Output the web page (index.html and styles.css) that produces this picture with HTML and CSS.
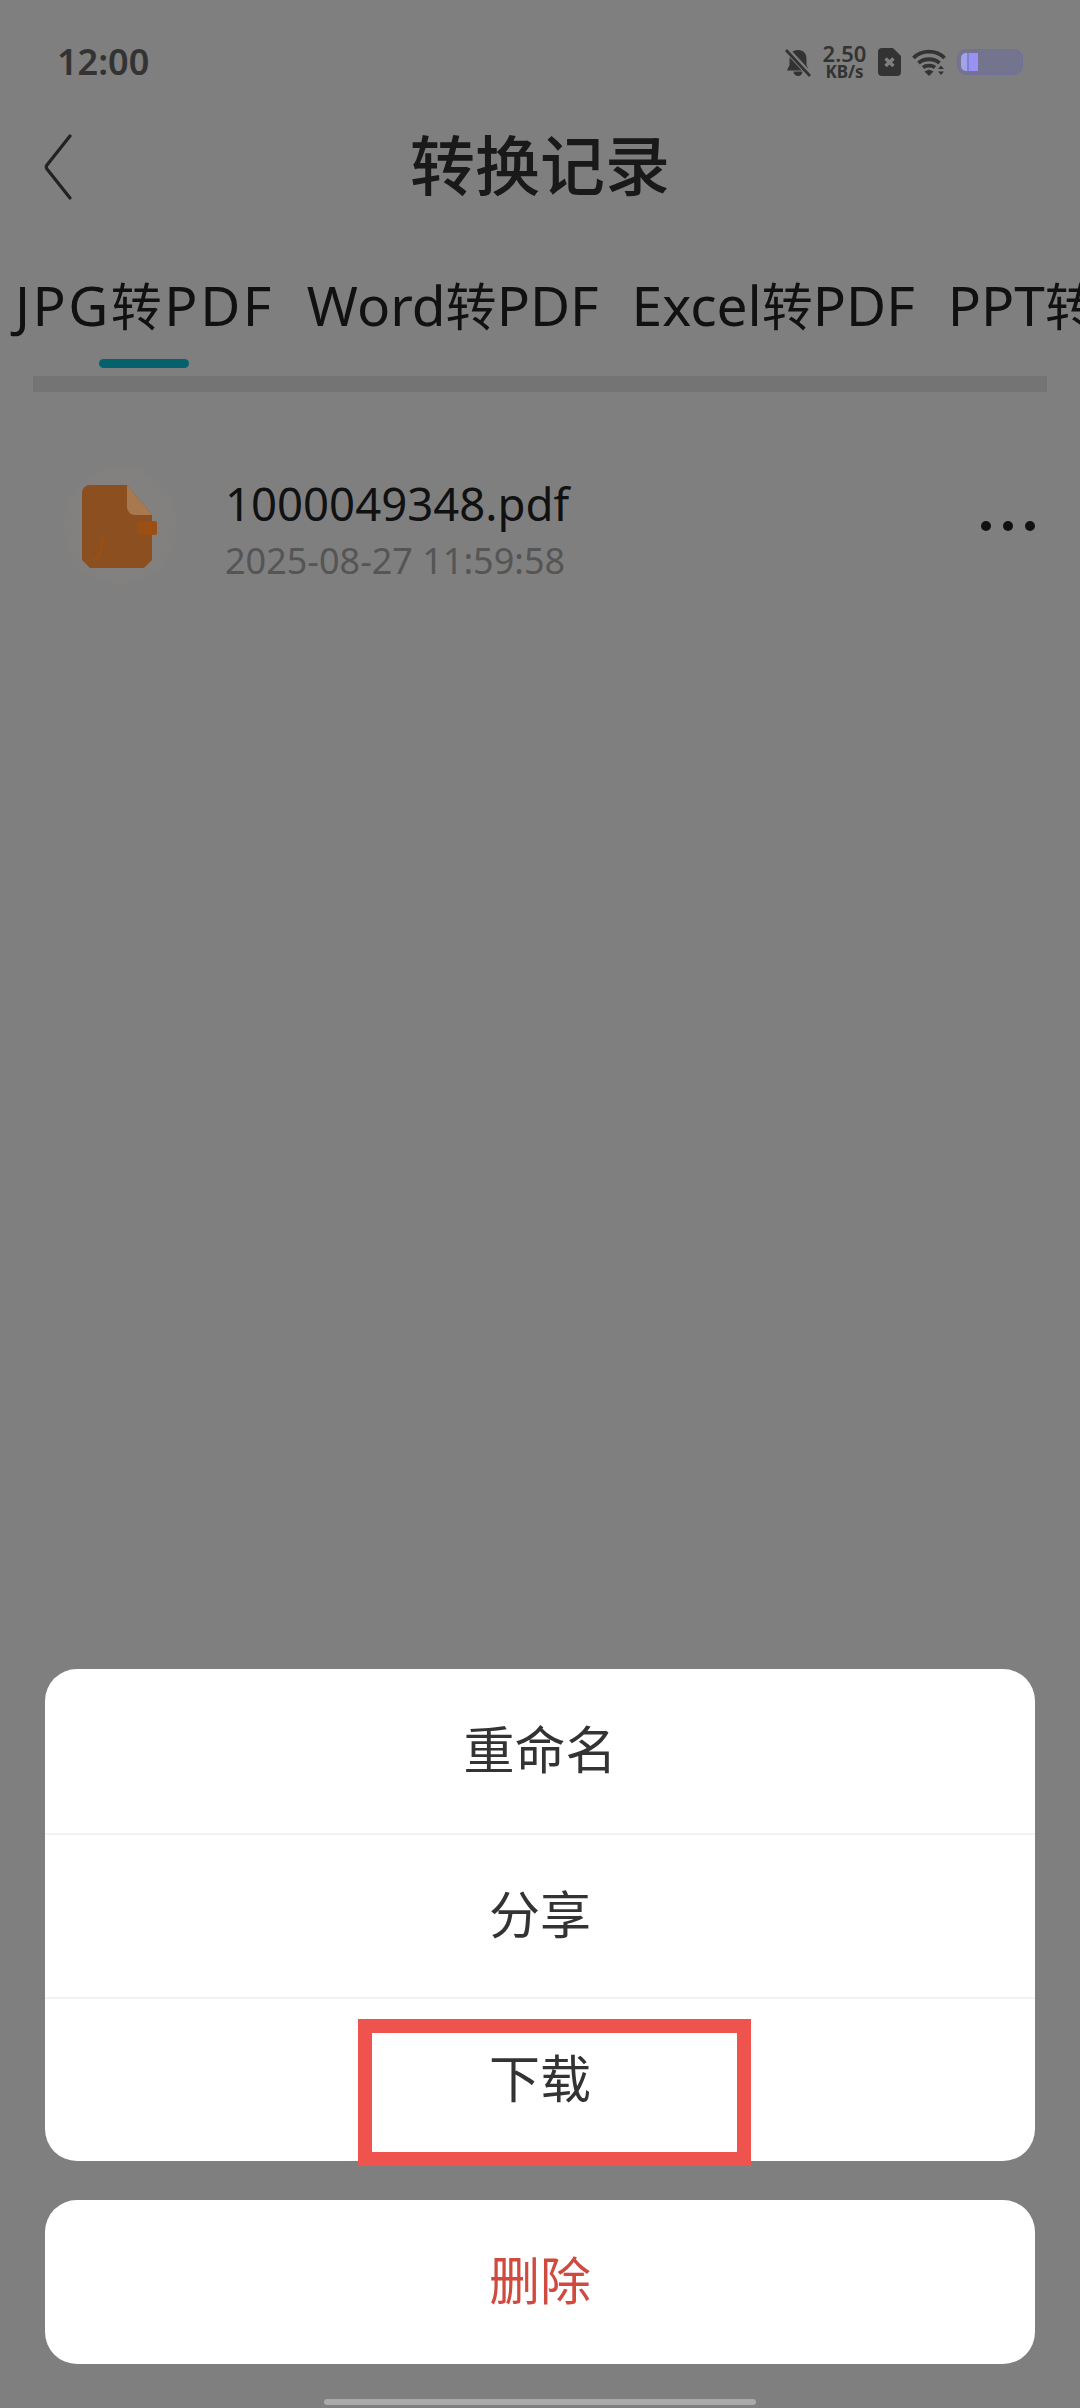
FILE: index.html
```html
<!DOCTYPE html>
<html lang="zh-CN">
<head>
  <meta charset="UTF-8" />
  <meta name="viewport" content="width=device-width, initial-scale=1.0"/>
  <title>转换记录</title>
  <link rel="stylesheet" href="styles.css">
</head>
<body>

<div class="page">
  <div class="status-bar">
    <span class="clock">12:00</span>
    <div class="status-icons">
      <svg class="ic-bell" viewBox="0 0 26 29" width="26" height="29">
        <path d="M13 2C7 2 4.500 6 4.500 11v6L2 22.500h22L21.500 17v-6C21.500 6 19 2 13 2z" fill="#666"/>
        <path d="M8.500 23.500a4.500 4.500 0 0 0 9 0z" fill="#666"/>
        <path d="M1 1l24 26" stroke="#fff" stroke-width="6"/>
        <path d="M1 2l24 26" stroke="#666" stroke-width="2.800"/>
      </svg>
      <div class="speed">
        <span class="speed-num">2.50</span>
        <span class="speed-unit">KB/s</span>
      </div>
      <svg class="ic-sim" viewBox="0 0 23 28" width="23" height="28">
        <path d="M4 0h11l8 8v16a4 4 0 0 1-4 4H4a4 4 0 0 1-4-4V4a4 4 0 0 1 4-4z" fill="#666"/>
        <path d="M7.500 10.500l8 7.500M15.500 10.500l-8 7.500" stroke="#fff" stroke-width="3.400"/>
      </svg>
      <svg class="ic-wifi" viewBox="0 0 34 27" width="34" height="27">
        <g fill="none" stroke="#666" stroke-width="3.800">
          <path d="M1.500 9c8-8.500 23-8.500 31 0"/>
          <path d="M6.500 14c5.500-5 15.500-5 21 0"/>
          <path d="M11 18.500c3-2.500 9-2.500 12 0"/>
        </g>
        <path d="M12.500 22.500l4.500-2 4.500 2-4.500 4.500z" fill="#666"/>
        <path d="M26 20l3-3.500 3 3.500zM26 22.500h6l-3 3.500z" fill="#666"/>
      </svg>
      <div class="battery">
        <div class="battery-fill"></div>
      </div>
    </div>
  </div>

  <header class="top-bar">
    <svg class="back" viewBox="0 0 28 66" width="28" height="66">
      <path d="M26 2L3 31q-1.500 2 0 4l23 29" fill="none" stroke="#444" stroke-width="3.200" stroke-linecap="round"/>
    </svg>
    <h1>转换记录</h1>
  </header>

  <nav class="tabs">
    <div class="tab tab-on"><span>JPG<b>转</b>PDF</span><i></i></div>
    <div class="tab"><span>Word<b>转</b>PDF</span></div>
    <div class="tab"><span>Excel<b>转</b>PDF</span></div>
    <div class="tab"><span>PPT<b>转</b>PDF</span></div>
  </nav>
  <div class="tabs-line"></div>

  <div class="file-row">
    <div class="file-icon">
      <svg viewBox="0 0 78 84" width="78" height="84">
        <path d="M9 0h37l25 30v45l-8 8H9l-8-8V8a8 8 0 0 1 8-8z" fill="#8c4f20"/>
        <path d="M46 0l25 30H54a8 8 0 0 1-8-8z" fill="#a8794f"/>
        <rect x="57" y="36" width="19" height="14" rx="2" fill="#9a4f15"/>
        <text x="16" y="70" class="file-letter">J</text>
      </svg>
    </div>
    <div class="file-info">
      <div class="file-name">1000049348.pdf</div>
      <div class="file-date">2025-08-27 11:59:58</div>
    </div>
    <div class="more"><i></i><i></i><i></i></div>
  </div>
</div>

<!-- menu shown on top of the dimmed list -->
<div class="mask">
  <div class="sheet">
    <div class="sheet-item">重命名</div>
    <div class="sheet-item">分享</div>
    <div class="sheet-item">下载</div>
    <div class="mark"></div>
  </div>
  <div class="sheet">
    <div class="sheet-item danger">删除</div>
  </div>
  <div class="home-bar"></div>
</div>

</body>
</html>
```

FILE: styles.css
```css
* {
  box-sizing: border-box;
}

body {
  margin: 0;
  width: 1080px;
  height: 2408px;
  overflow: hidden;
  position: relative;
  background: #fff;
  font-family: "Noto Sans", "Noto Sans CJK SC", sans-serif;
}

.page {
  height: 100%;
}

/* Barra de estado */
.status-bar {
  height: 121px;
  padding: 44px 57px 0;
  display: flex;
  justify-content: space-between;
  align-items: flex-start;
}

.clock {
  font-size: 36px;
  line-height: 36px;
  font-weight: 600;
  color: #666;
}

.status-icons {
  display: flex;
  align-items: center;
  height: 36px;
}

.ic-bell { margin-right: 12px; }
.ic-sim { margin-left: 12px; }
.ic-wifi { margin-left: 11px; }

.speed {
  display: flex;
  flex-direction: column;
  align-items: center;
  color: #666;
  width: 43px;
}

.speed-num {
  font-size: 22px;
  line-height: 20px;
  font-weight: 600;
}

.speed-unit {
  font-size: 17px;
  line-height: 18px;
  font-weight: 700;
}

/* the battery keeps its bright tint, so it sits above the mask */
.battery {
  position: relative;
  z-index: 2;
  width: 66px;
  height: 26px;
  margin-left: 11px;
  padding: 3px;
  background: #74748f;
  border: 1px solid #70709c;
  border-radius: 9px;
}

.battery-fill {
  width: 17px;
  height: 100%;
  background: linear-gradient(to right, #a0a2ec 0 38%, #7f7fd0 38% 48%, #9a90f6 48%);
  border-radius: 5px 0 0 5px;
}

/* Cabecera */
.top-bar {
  height: 88px;
  position: relative;
  display: flex;
  align-items: center;
  justify-content: center;
}

.back {
  position: absolute;
  left: 44px;
  top: 13px;
}

h1 {
  margin: 0;
  font-size: 65px;
  line-height: 88px;
  font-weight: 500;
  color: #333;
}

/* Pestañas */
.tabs {
  display: flex;
  gap: 33px;
  padding: 61px 0 0 15px;
  overflow: hidden;
  white-space: nowrap;
}

.tab {
  flex: none;
  display: flex;
  flex-direction: column;
  align-items: center;
  font-size: 55px;
  line-height: 70px;
  color: #222;
}

.tab b {
  font-size: 51px;
  font-weight: 400;
}

.tab-on {
  letter-spacing: 2.500px;
}

.tab i {
  display: block;
  width: 90px;
  height: 9px;
  margin-top: 18px;
  border-radius: 5px;
  background: #0ac4d8;
}

.tabs-line {
  height: 16px;
  margin: 8px 33px 0;
  background: #e8e8e8;
}

/* Fila del archivo */
.file-row {
  display: flex;
  align-items: center;
  height: 148px;
  margin-top: 59px;
  padding: 0 45px 0 50px;
}

.file-icon {
  position: relative;
  z-index: 2;
  width: 141px;
  height: 148px;
  margin-right: 34px;
  padding: 34px 0 0 31px;
  background: radial-gradient(closest-side, #838180 60%, rgba(128,128,128,0) 100%);
  filter: blur(0.6px);
}

.file-letter {
  font-size: 26px;
  font-style: italic;
  fill: #9d4f12;
}

.file-info {
  flex: 1;
  padding-top: 5px;
}

.file-name {
  font-size: 45.500px;
  line-height: 62px;
  color: #222;
}

.file-date {
  font-size: 36px;
  line-height: 46px;
  margin-top: 4px;
  color: #aaa;
}

.more {
  display: flex;
  gap: 12px;
  padding-top: 2px;
}

.more i {
  width: 10px;
  height: 10px;
  border-radius: 50%;
  background: #222;
}

/* Capa oscura y menú inferior */
.mask {
  position: absolute;
  inset: 0;
  display: flex;
  flex-direction: column;
  justify-content: flex-end;
  gap: 39px;
  padding: 0 45px 44px;
  background: rgba(0,0,0,0.5);
}

.sheet {
  position: relative;
  background: #fff;
  border-radius: 32px;
}

.sheet-item {
  height: 164px;
  display: flex;
  align-items: center;
  justify-content: center;
  padding-bottom: 8px;
  font-size: 51px;
  color: #333;
  border-top: 2px solid #f2f2f2;
}

.sheet-item:first-child {
  border-top: none;
}

.danger {
  color: #d14a40;
}

.mark {
  position: absolute;
  left: 313px;
  bottom: -5px;
  width: 393px;
  height: 147px;
  border: 14px solid #ee534d;
}

.home-bar {
  position: absolute;
  left: 324px;
  bottom: 3px;
  width: 432px;
  height: 6px;
  border-radius: 3px;
  background: #aaa;
}
```
